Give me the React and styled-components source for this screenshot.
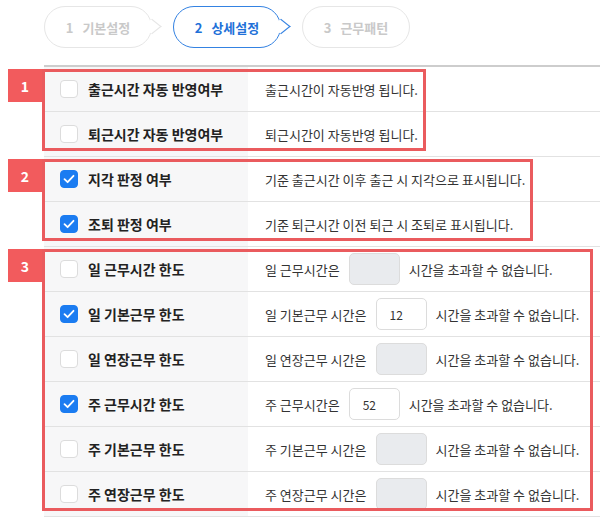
import styled, { createGlobalStyle, css } from 'styled-components';

const GlobalStyle = createGlobalStyle`
  body {
    margin: 0;
    background: #fff;
    font-family: "Noto Sans CJK KR", "Noto Sans", sans-serif;
  }
`;

const Page = styled.div`
  padding: 6px 12px 0 44px;
`;

const Steps = styled.div`
  display: flex;
  gap: 21px;
  margin-bottom: 17px;
`;

const Step = styled.div`
  position: relative;
  width: 108px;
  height: 42px;
  box-sizing: border-box;
  border-radius: 21px;
  background: #fff;
  display: flex;
  align-items: center;
  justify-content: center;
  gap: 9px;
  font-size: 13px;
  font-weight: 700;
  border: 1px solid #e6e6e6;
  color: #c9c9c9;

  ${(p) =>
    p.$active &&
    css`
      border: 1.5px solid #3482e2;
      color: #2170d8;
    `}

  ${(p) =>
    p.$tail &&
    css`
      &::after {
        content: '';
        position: absolute;
        top: 50%;
        right: -1px;
        width: 11px;
        height: 11px;
        margin-top: -6px;
        background: #fff;
        border-top: ${p.$active ? '1.5px solid #3482e2' : '1px solid #e6e6e6'};
        border-right: ${p.$active ? '1.5px solid #3482e2' : '1px solid #e6e6e6'};
        box-sizing: border-box;
        transform: translateX(50%) scaleX(1.25) rotate(45deg);
      }
    `}
`;

const Table = styled.div`
  border-top: 2px solid #cdcdcd;
`;

const Section = styled.div`
  position: relative;
`;

const Marker = styled.div`
  position: absolute;
  top: 2px;
  bottom: 6px;
  left: -2px;
  box-sizing: border-box;
  border: 3px solid #ea5b5e;
  pointer-events: none;
`;

const Tag = styled.div`
  position: absolute;
  top: -3px;
  left: -37px;
  width: 34px;
  height: 33px;
  background: #f25b5d;
  color: #fff;
  font-size: 14px;
  font-weight: 700;
  display: flex;
  align-items: center;
  justify-content: center;
`;

const Row = styled.div`
  display: flex;
  height: 44px;
  border-bottom: 1px solid #e2e2e2;
`;

const LabelCell = styled.label`
  width: 204px;
  flex: none;
  background: #f7f7f8;
  display: flex;
  align-items: center;
  gap: 10px;
  padding-left: 16px;
  box-sizing: border-box;
  font-size: 14px;
  font-weight: 700;
  color: #222;
`;

const Box = styled.span`
  width: 18px;
  height: 18px;
  box-sizing: border-box;
  border-radius: 4px;
  display: flex;
  align-items: center;
  justify-content: center;
  border: 1px solid ${(p) => (p.$checked ? '#1b7cf1' : '#dcdcdc')};
  background: ${(p) => (p.$checked ? '#1b7cf1' : '#fff')};
`;

const DescCell = styled.div`
  flex: 1;
  display: flex;
  align-items: center;
  padding-left: 17px;
  font-size: 13px;
  color: #333;
`;

const HourInput = styled.input`
  width: 51px;
  height: 32px;
  box-sizing: border-box;
  margin: 0 9px;
  padding: 0 0 0 13px;
  border: 1px solid #dcdcdc;
  border-radius: 5px;
  background: #fff;
  font-family: inherit;
  font-size: 12px;
  color: #333;

  &:disabled {
    background: #e9ebee;
  }
`;

const steps = [
  { no: 1, name: '기본설정' },
  { no: 2, name: '상세설정', active: true },
  { no: 3, name: '근무패턴' },
];

const sections = [
  {
    no: 1,
    width: 384,
    rows: [
      { label: '출근시간 자동 반영여부', desc: '출근시간이 자동반영 됩니다.' },
      { label: '퇴근시간 자동 반영여부', desc: '퇴근시간이 자동반영 됩니다.' },
    ],
  },
  {
    no: 2,
    width: 491,
    rows: [
      { label: '지각 판정 여부', checked: true, desc: '기준 출근시간 이후 출근 시 지각으로 표시됩니다.' },
      { label: '조퇴 판정 여부', checked: true, desc: '기준 퇴근시간 이전 퇴근 시 조퇴로 표시됩니다.' },
    ],
  },
  {
    no: 3,
    width: 551,
    rows: [
      { label: '일 근무시간 한도', prefix: '일 근무시간은' },
      { label: '일 기본근무 한도', checked: true, prefix: '일 기본근무 시간은', value: '12' },
      { label: '일 연장근무 한도', prefix: '일 연장근무 시간은' },
      { label: '주 근무시간 한도', checked: true, prefix: '주 근무시간은', value: '52' },
      { label: '주 기본근무 한도', prefix: '주 기본근무 시간은' },
      { label: '주 연장근무 한도', prefix: '주 연장근무 시간은' },
    ],
  },
];

function Checkbox({ checked }) {
  return (
    <Box $checked={checked}>
      {checked && (
        <svg width="12" height="10" viewBox="0 0 12 10">
          <path d="M1.5 5.2 L4.6 8.2 L10.5 1.8" fill="none" stroke="#fff" strokeWidth="1.8" strokeLinecap="round" strokeLinejoin="round" />
        </svg>
      )}
    </Box>
  );
}

function App() {
  return (
    <Page>
      <GlobalStyle />
      <Steps>
        {steps.map((s, i) => (
          <Step key={s.no} $active={s.active} $tail={i < steps.length - 1}>
            <span>{s.no}</span>
            <span>{s.name}</span>
          </Step>
        ))}
      </Steps>

      <Table>
        {sections.map((sec) => (
          <Section key={sec.no}>
            {sec.rows.map((r) => (
              <Row key={r.label}>
                <LabelCell>
                  <Checkbox checked={r.checked} />
                  {r.label}
                </LabelCell>
                <DescCell>
                  {r.desc ? (
                    r.desc
                  ) : (
                    <>
                      {r.prefix}
                      <HourInput value={r.value || ''} disabled={!r.checked} readOnly />
                      시간을 초과할 수 없습니다.
                    </>
                  )}
                </DescCell>
              </Row>
            ))}
            <Marker style={{ width: sec.width }}>
              <Tag>{sec.no}</Tag>
            </Marker>
          </Section>
        ))}
      </Table>
    </Page>
  );
}

export default App;
